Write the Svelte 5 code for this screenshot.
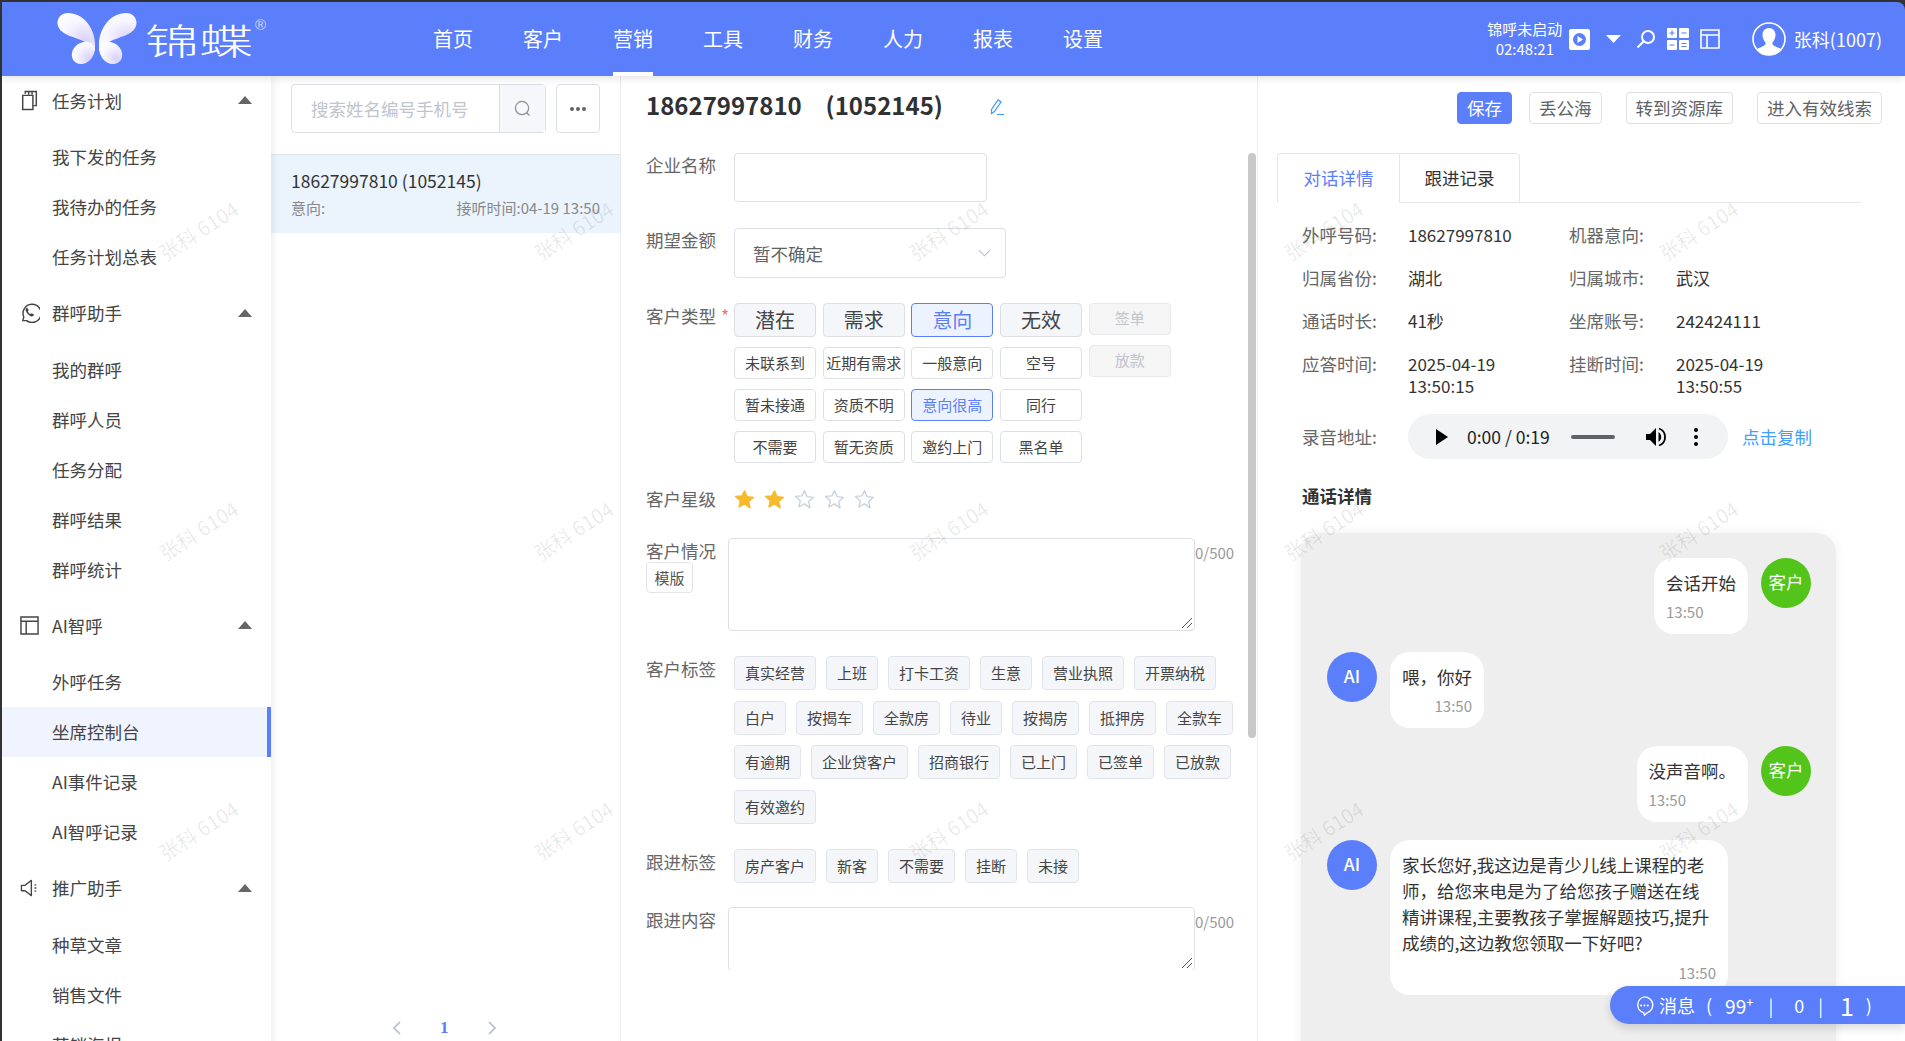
<script>
    const navItems = ['首页', '客户', '营销', '工具', '财务', '人力', '报表', '设置'];

    const groups = [
        { title: '任务计划', icon: 'doc', items: ['我下发的任务', '我待办的任务', '任务计划总表'] },
        { title: '群呼助手', icon: 'phone', items: ['我的群呼', '群呼人员', '任务分配', '群呼结果', '群呼统计'] },
        { title: 'AI智呼', icon: 'panel', items: ['外呼任务', '坐席控制台', 'AI事件记录', 'AI智呼记录'] },
        { title: '推广助手', icon: 'horn', items: ['种草文章', '销售文件', '营销海报'] }
    ];

    const typeRows = [
        ['潜在', '需求', '意向', '无效'],
        ['未联系到', '近期有需求', '一般意向', '空号'],
        ['暂未接通', '资质不明', '意向很高', '同行'],
        ['不需要', '暂无资质', '邀约上门', '黑名单']
    ];
    const activeTypes = ['意向', '意向很高'];

    const customerTags = ['真实经营', '上班', '打卡工资', '生意', '营业执照', '开票纳税', '白户', '按揭车', '全款房', '待业', '按揭房', '抵押房', '全款车', '有逾期', '企业贷客户', '招商银行', '已上门', '已签单', '已放款', '有效邀约'];
    const followTags = ['房产客户', '新客', '不需要', '挂断', '未接'];

    const info = [
        ['外呼号码:', '18627997810', '机器意向:', ''],
        ['归属省份:', '湖北', '归属城市:', '武汉'],
        ['通话时长:', '41秒', '坐席账号:', '242424111'],
        ['应答时间:', '2025-04-19 13:50:15', '挂断时间:', '2025-04-19 13:50:55']
    ];

    // watermark repeats on a fixed 375 x 300 step
    const marks = Array.from({ length: 15 });
</script>

<div class="page">
    <header class="topbar">
        <div class="logo">
            <svg class="wings" viewBox="0 0 80 52" width="80" height="52">
                <defs>
                    <radialGradient id="wing" cx="0.75" cy="0.75" r="0.9">
                        <stop offset="0" stop-color="#d9d0fa" />
                        <stop offset="0.6" stop-color="#f6f4ff" />
                        <stop offset="1" stop-color="#ffffff" />
                    </radialGradient>
                </defs>
                <path fill="url(#wing)" d="M38 30C37 14 26 0 11 0 3 0-1 7 1 13c3 9 17 11 25 15 5 2 9 5 12 10z" />
                <path fill="url(#wing)" d="M42 30C43 14 54 0 69 0c8 0 12 7 10 13-3 9-17 11-25 15-5 2-9 5-12 10z" />
                <path fill="url(#wing)" d="M38 36c-1 8-6 15-14 15-7 0-10-6-9-11 1-6 6-10 12-11 5-1 9 1 11 7z" />
                <path fill="url(#wing)" d="M42 36c1 8 6 15 14 15 7 0 10-6 9-11-1-6-6-10-12-11-5-1-9 1-11 7z" />
            </svg>
            <span class="brand">锦蝶</span>
            <span class="reg">®</span>
        </div>
        <nav class="nav">
            {#each navItems as item}
                <span class="nav-item" class:on={item === '营销'}>{item}</span>
            {/each}
        </nav>
        <div class="tools">
            <div class="call">
                <span>锦呼未启动</span>
                <span>02:48:21</span>
            </div>
            <svg class="t-play" viewBox="0 0 21 21" width="21" height="21">
                <rect width="21" height="21" rx="2" fill="#fff" />
                <circle cx="10.5" cy="10.5" r="6.5" fill="#5b7efb" />
                <path d="M8.5 7l5.5 3.5-5.5 3.5z" fill="#fff" />
            </svg>
            <svg class="t-caret" viewBox="0 0 15 8" width="15" height="8"><path d="M0 0h15L7.5 8z" fill="#fff" /></svg>
            <svg class="t-search" viewBox="0 0 20 20" width="20" height="20">
                <circle cx="12" cy="8" r="6" fill="none" stroke="#fff" stroke-width="2" />
                <path d="M7.5 12.5L1.5 18.5" stroke="#fff" stroke-width="2.2" />
            </svg>
            <svg class="t-calc" viewBox="0 0 22 22" width="22" height="22">
                <rect width="10" height="10" rx="1" fill="#fff" />
                <rect x="12" width="10" height="10" rx="1" fill="#fff" />
                <rect y="12" width="10" height="10" rx="1" fill="#fff" />
                <rect x="12" y="12" width="10" height="10" rx="1" fill="#fff" />
                <path d="M2.5 5h5M5 2.5v5M14.5 5h5M2.5 17h5M14.5 15.5h5M14.5 18.500h5" stroke="#5b7efb" stroke-width="1.2" />
            </svg>
            <svg class="t-panel" viewBox="0 0 20 20" width="20" height="20">
                <path d="M1 1h18v18H1zM1 6h18M7 6v13" fill="none" stroke="#fff" stroke-width="1.6" />
            </svg>
            <svg class="t-avatar" viewBox="0 0 34 34" width="34" height="34">
                <circle cx="17" cy="17" r="16" fill="none" stroke="#fff" stroke-width="1.6" />
                <path d="M17 6c4 0 6.500 3 6.500 7 0 3-1.500 6-3 7.500v2c2 2 6 3 8.500 4.500a15 15 0 0 1-24 0c2.500-1.500 6.500-2.500 8.500-4.500v-2c-1.500-1.500-3-4.500-3-7.500 0-4 2.500-7 6.500-7z" fill="#fff" />
            </svg>
            <span class="user">张科(1007)</span>
        </div>
    </header>

    <div class="body">
        <aside class="side">
            {#each groups as group}
                <div class="group-head">
                    <span class="g-icon">
                        {#if group.icon === 'doc'}
                            <svg viewBox="0 0 20 24" width="17" height="21"><path d="M5 4V1.500h13V18h-4M2 6h12v16.500H2zM9 1v4M13 1v4" fill="none" stroke="#444" stroke-width="1.700" /></svg>
                        {:else if group.icon === 'phone'}
                            <svg viewBox="0 0 22 22" width="21" height="21"><path d="M4 19.500l1-3.800A9.500 9.500 0 1 1 8 19.500z" fill="none" stroke="#444" stroke-width="1.500" /><path d="M7.500 6.500c-1 1-.8 3 1 5.300s4 3.700 5.700 3.200c1-.3 1.500-1 1.500-1.800l-2.500-1.500-1 1c-1.500-.5-2.500-1.800-3-3l1-1L8.700 6c-.4 0-.8.100-1.200.5z" fill="#444" /></svg>
                        {:else if group.icon === 'panel'}
                            <svg viewBox="0 0 20 20" width="19" height="19"><path d="M1 1h18v18H1zM1 5.500h18M6.500 5.500V19" fill="none" stroke="#444" stroke-width="1.500" /></svg>
                        {:else}
                            <svg viewBox="0 0 22 20" width="20" height="18"><path d="M1.500 7v6h4l7 5.500v-17l-7 5.500z" fill="none" stroke="#444" stroke-width="1.500" stroke-linejoin="round" /><path d="M16 6.500h2M16 10h2M16 13.500h2" stroke="#444" stroke-width="1.500" /></svg>
                        {/if}
                    </span>
                    <span class="g-title">{group.title}</span>
                    <span class="g-caret"></span>
                </div>
                <ul class="group-items">
                    {#each group.items as item}
                        <li class:current={item === '坐席控制台'}>{item}</li>
                    {/each}
                </ul>
            {/each}
        </aside>

        <section class="list">
            <div class="search-row">
                <div class="search">
                    <span class="ph">搜索姓名编号手机号</span>
                    <span class="s-btn">
                        <svg viewBox="0 0 18 18" width="17" height="17"><circle cx="8.500" cy="8.500" r="7" fill="none" stroke="#8a8f99" stroke-width="1.300" /><path d="M13.500 13.500l3 3" stroke="#8a8f99" stroke-width="1.300" /></svg>
                    </span>
                </div>
                <div class="more"><i></i><i></i><i></i></div>
            </div>
            <div class="lead">
                <div class="lead-name">18627997810 (1052145)</div>
                <div class="lead-sub"><span>意向:</span><span>接听时间:04-19 13:50</span></div>
            </div>
            <div class="pager">
                <svg viewBox="0 0 8 14" width="8" height="14"><path d="M7 1L1 7l6 6" fill="none" stroke="#b4bccc" stroke-width="1.600" /></svg>
                <b>1</b>
                <svg viewBox="0 0 8 14" width="8" height="14"><path d="M1 1l6 6-6 6" fill="none" stroke="#b4bccc" stroke-width="1.600" /></svg>
            </div>
        </section>

        <section class="detail">
            <div class="detail-head">
                <h2>18627997810 &nbsp;&nbsp;(1052145)</h2>
                <svg class="edit" viewBox="0 0 16 18" width="16" height="18">
                    <path d="M2.500 11.500L9 2l3 2-6.500 9.500-3 2z" fill="none" stroke="#409eff" stroke-width="1.300" />
                    <path d="M8 16.500h7" stroke="#409eff" stroke-width="1.200" />
                </svg>
            </div>
            <div class="form">
                <div class="row r-name">
                    <span class="label">企业名称</span>
                    <div class="input name"></div>
                </div>
                <div class="row r-money">
                    <span class="label">期望金额</span>
                    <div class="input select">
                        <span>暂不确定</span>
                        <svg viewBox="0 0 14 8" width="13" height="8"><path d="M1 1l6 6 6-6" fill="none" stroke="#b4bccc" stroke-width="1.100" /></svg>
                    </div>
                </div>
                <div class="row r-type">
                    <span class="label">客户类型<em>*</em></span>
                    <div class="types">
                        <div class="type-grid">
                            {#each typeRows as cols, r}
                                {#each cols as t}
                                    <span class="type" class:big={r === 0} class:active={activeTypes.includes(t)}>{t}</span>
                                {/each}
                            {/each}
                        </div>
                        <div class="type-off">
                            <span>签单</span>
                            <span>放款</span>
                        </div>
                    </div>
                </div>
                <div class="row r-star">
                    <span class="label">客户星级</span>
                    <div class="stars">
                        {#each [1, 2, 3, 4, 5] as n}
                            <svg viewBox="0 0 24 24" width="21" height="21">
                                <path d="M12 2l3 6.800 7.300.7-5.500 4.900 1.600 7.200L12 17l-6.400 3.600 1.600-7.200L1.700 8.500 9 7.800z"
                                    fill={n < 3 ? '#f7ba2a' : 'none'} stroke={n < 3 ? '#f7ba2a' : '#c6d1de'} stroke-width="1.500" stroke-linejoin="round" />
                            </svg>
                        {/each}
                    </div>
                </div>
                <div class="row r-note">
                    <div class="label-stack">
                        <span class="label">客户情况</span>
                        <span class="tpl">模版</span>
                    </div>
                    <div class="textarea"><span class="grip"></span></div>
                    <span class="count">0/500</span>
                </div>
                <div class="row r-tags">
                    <span class="label">客户标签</span>
                    <div class="tags">
                        {#each customerTags as t}<span class="tag">{t}</span>{/each}
                    </div>
                </div>
                <div class="row r-follow">
                    <span class="label">跟进标签</span>
                    <div class="tags">
                        {#each followTags as t}<span class="tag">{t}</span>{/each}
                    </div>
                </div>
                <div class="row r-content">
                    <span class="label">跟进内容</span>
                    <div class="textarea"><span class="grip"></span></div>
                    <span class="count">0/500</span>
                </div>
            </div>
            <span class="thumb"></span>
        </section>

        <section class="right">
            <div class="actions">
                <span class="act primary">保存</span>
                <span class="act">丢公海</span>
                <span class="act">转到资源库</span>
                <span class="act">进入有效线索</span>
            </div>
            <div class="tabs">
                <span class="tab on">对话详情</span>
                <span class="tab">跟进记录</span>
            </div>
            <div class="info">
                {#each info as row}
                    <span class="k">{row[0]}</span>
                    <span class="v narrow">{row[1]}</span>
                    <span class="k">{row[2]}</span>
                    <span class="v narrow">{row[3]}</span>
                {/each}
            </div>
            <div class="audio-row">
                <span class="k">录音地址:</span>
                <div class="audio">
                    <svg viewBox="0 0 12 16" width="12" height="16"><path d="M0 0l12 8-12 8z" fill="#000" /></svg>
                    <span class="time">0:00 / 0:19</span>
                    <span class="track"></span>
                    <svg class="vol" viewBox="0 0 20 20" width="20" height="20"><path d="M0 7v6h4l6 6V1L4 7z" fill="#000" /><path d="M12.500 5a6 6 0 0 1 0 10z" fill="#000" /><path d="M13 1.500a9 9 0 0 1 0 17" fill="none" stroke="#000" stroke-width="1.800" /></svg>
                    <span class="dots"><i></i><i></i><i></i></span>
                </div>
                <span class="copy">点击复制</span>
            </div>
            <h3 class="call-title">通话详情</h3>
            <div class="chat">
                <div class="msg me">
                    <div class="bubble"><p>会话开始</p><time>13:50</time></div>
                    <span class="avatar green">客户</span>
                </div>
                <div class="msg">
                    <span class="avatar blue">AI</span>
                    <div class="bubble"><p>喂，你好</p><time>13:50</time></div>
                </div>
                <div class="msg me">
                    <div class="bubble"><p>没声音啊。</p><time>13:50</time></div>
                    <span class="avatar green">客户</span>
                </div>
                <div class="msg">
                    <span class="avatar blue">AI</span>
                    <div class="bubble wide">
                        <p>家长您好,我这边是青少儿线上课程的老<br />师，给您来电是为了给您孩子赠送在线<br />精讲课程,主要教孩子掌握解题技巧,提升<br />成绩的,这边教您领取一下好吧?</p>
                        <time>13:50</time>
                    </div>
                </div>
            </div>
        </section>
    </div>

    <div class="msg-bar">
        <svg viewBox="0 0 22 22" width="21" height="21">
            <path d="M11 2a8.500 8.500 0 0 1 3 16.500L11 21l-1-2.500A8.500 8.500 0 0 1 11 2z" fill="none" stroke="#fff" stroke-width="1.500" />
            <circle cx="7.500" cy="11" r="1.100" fill="#fff" /><circle cx="11" cy="11" r="1.100" fill="#fff" /><circle cx="14.500" cy="11" r="1.100" fill="#fff" />
        </svg>
        <span class="m-title">消息</span>
        <span class="m-br">(</span>
        <span class="m-num">99<sup>+</sup></span>
        <span class="m-sep">|</span>
        <span class="m-zero">0</span>
        <span class="m-sep">|</span>
        <span class="m-one">1</span>
        <span class="m-br">)</span>
    </div>

    <div class="marks">
        {#each marks as _}
            <span class="mark"><span>张科 6104</span></span>
        {/each}
    </div>
</div>

<style>
    :global(body) {
        margin: 0;
        overflow: hidden;
        background: #fff;
    }

    .page {
        position: relative;
        width: 1905px;
        height: 1041px;
        overflow: hidden;
        background: #333;
        padding: 2px 0 0 2px;
        box-sizing: border-box;
        font-family: "Noto Sans CJK SC", "Liberation Sans", sans-serif;
        font-size: 17.5px;
        color: #333;
    }

    /* top bar */
    .topbar {
        position: relative;
        z-index: 3;
        display: flex;
        align-items: center;
        height: 74px;
        background: #5b7efb;
        border-top-right-radius: 8px;
        box-shadow: 0 2px 8px rgba(0, 0, 0, 0.12);
        color: #fff;
    }

    .logo {
        display: flex;
        align-items: center;
        width: 431px;
        padding-left: 55px;
        box-sizing: border-box;
    }

    .brand {
        flex: none;
        width: 72px;
        margin-left: 8px;
        font-size: 36px;
        font-weight: 300;
        line-height: 48px;
        transform: scaleX(1.5);
        transform-origin: left;
    }

    .reg {
        flex: none;
        width: 16px;
        margin: -28px 0 0 38px;
        font-family: "Liberation Sans", sans-serif;
        font-size: 15px;
        line-height: 16px;
        opacity: 0.7;
    }

    .nav {
        display: flex;
        gap: 50px;
        height: 74px;
    }

    .nav-item {
        width: 40px;
        height: 70px;
        line-height: 74px;
        font-size: 20px;
        white-space: nowrap;
        border-bottom: 4px solid transparent;
    }

    .nav-item.on {
        border-bottom-color: #fff;
    }

    .tools {
        display: flex;
        align-items: center;
        margin-left: auto;
        padding-right: 23px;
    }

    .call {
        display: flex;
        flex-direction: column;
        align-items: center;
        width: 76px;
        font-size: 15px;
        line-height: 20px;
    }

    .t-play {
        margin-left: 6px;
    }

    .t-caret {
        margin-left: 16px;
    }

    .t-search {
        margin-left: 15px;
    }

    .t-calc {
        margin-left: 11px;
    }

    .t-panel {
        margin-left: 11px;
    }

    .t-avatar {
        margin-left: 32px;
    }

    .user {
        margin-left: 8px;
        font-size: 18px;
    }

    .body {
        display: flex;
        height: 965px;
        background: #fff;
    }

    /* sidebar */
    .side {
        position: relative;
        z-index: 2;
        width: 269px;
        flex: none;
        height: 1000px;
        box-shadow: 2px 0 8px rgba(0, 0, 0, 0.08);
        background: #fff;
    }

    .group-head {
        display: flex;
        align-items: center;
        height: 48px;
        padding: 0 0 2px 17px;
        color: #444;
    }

    .g-icon {
        display: flex;
        justify-content: center;
        width: 21px;
    }

    .g-title {
        margin-left: 12px;
    }

    .g-caret {
        margin-left: auto;
        margin-right: 19px;
        border: 7px solid transparent;
        border-top: 0;
        border-bottom: 8px solid #666;
    }

    .group-items {
        list-style: none;
        margin: 0;
        padding: 6px 0 6.500px;
    }

    .group-items li {
        height: 50px;
        line-height: 49px;
        padding-left: 50px;
        color: #444;
    }

    .group-items li.current {
        background: #f0f4ff;
        border-right: 4px solid #5b7efb;
    }

    /* lead list */
    .list {
        position: relative;
        flex: none;
        width: 350px;
        border-right: 1px solid #e8eaee;
        box-sizing: border-box;
        padding-top: 8px;
    }

    .search-row {
        display: flex;
        gap: 10px;
        padding-left: 20px;
        height: 49px;
    }

    .search {
        display: flex;
        width: 255px;
        border: 1px solid #dcdfe6;
        border-radius: 4px;
        box-sizing: border-box;
    }

    .ph {
        flex: 1;
        padding-left: 19px;
        line-height: 47px;
        color: #c0c4cc;
    }

    .s-btn {
        display: flex;
        align-items: center;
        justify-content: center;
        width: 45px;
        background: #f5f7fa;
        border-left: 1px solid #dcdfe6;
    }

    .more {
        display: flex;
        align-items: center;
        justify-content: center;
        gap: 2px;
        width: 44px;
        border: 1px solid #dcdfe6;
        border-radius: 4px;
        box-sizing: border-box;
    }

    .more i {
        width: 4px;
        height: 4px;
        border-radius: 50%;
        background: #606266;
    }

    .lead {
        margin-top: 21px;
        height: 79px;
        padding: 0 20px;
        background: #ebf3fd;
        border-top: 1px solid #e2e7ee;
        box-sizing: border-box;
    }

    .lead-name {
        padding-top: 13px;
        font-size: 17.500px;
        line-height: 26px;
        color: #333;
    }

    .lead-sub {
        display: flex;
        justify-content: space-between;
        margin-top: 1.500px;
        font-size: 15px;
        line-height: 24px;
        color: #888;
    }

    .pager {
        position: absolute;
        left: 122px;
        top: 942px;
        display: flex;
        align-items: center;
        gap: 39px;
    }

    .pager b {
        color: #5b7efb;
        font-size: 17px;
        font-family: "Liberation Serif", serif;
    }

    /* form */
    .detail {
        position: relative;
        flex: none;
        width: 637px;
        padding-left: 25px;
        box-sizing: border-box;
        border-right: 1px solid #eceef2;
    }

    .detail-head {
        display: flex;
        align-items: center;
        height: 57px;
        padding-bottom: 20px;
    }

    h2 {
        margin: 0;
        font-size: 24px;
        font-weight: 700;
        word-spacing: 2.500px;
        color: #303133;
        white-space: nowrap;
    }

    .edit {
        margin: 4px 0 0 46px;
    }

    .form {
        height: 817px;
        overflow: hidden;
    }

    .row {
        display: flex;
    }

    .label {
        flex: none;
        width: 88px;
        line-height: 26px;
        color: #666;
        white-space: nowrap;
    }

    .r-name .label,
    .r-money .label {
        line-height: 24px;
    }

    .label em {
        color: #f56c6c;
        font-style: normal;
        margin-left: 5px;
    }

    .input {
        border: 1px solid #dcdfe6;
        border-radius: 4px;
        box-sizing: border-box;
    }

    .name {
        width: 253px;
        height: 49px;
    }

    .r-money {
        margin-top: 26px;
    }

    .select {
        display: flex;
        align-items: center;
        justify-content: space-between;
        width: 272px;
        height: 50px;
        padding: 0 14px 0 18px;
        color: #606266;
    }

    .r-type {
        margin-top: 25px;
    }

    .types {
        display: flex;
        gap: 6.700px;
    }

    .type-grid {
        display: grid;
        grid-template-columns: repeat(4, 82px);
        column-gap: 6.700px;
        row-gap: 10px;
    }

    .type {
        height: 32px;
        line-height: 30px;
        text-align: center;
        font-size: 15px;
        white-space: nowrap;
        border: 1px solid #dcdfe6;
        border-radius: 4px;
        box-sizing: border-box;
        color: #444;
    }

    .type.big {
        height: 34px;
        line-height: 31px;
        font-size: 20px;
        background: #f4f6fa;
    }

    .type.active {
        background: #ecf3ff;
        border-color: #5b7efb;
        color: #5b7efb;
    }

    .type-off {
        display: flex;
        flex-direction: column;
        gap: 10px;
    }

    .type-off span {
        width: 82px;
        height: 32px;
        line-height: 28px;
        text-align: center;
        font-size: 15px;
        background: #f5f5f5;
        border: 1px solid #e8e9ec;
        border-radius: 4px;
        box-sizing: border-box;
        color: #c0c4cc;
    }

    .r-star {
        margin-top: 21px;
        align-items: center;
        height: 30px;
    }

    .stars {
        display: flex;
        gap: 9px;
    }

    .r-note {
        margin-top: 24px;
        height: 93px;
    }

    .label-stack {
        display: flex;
        flex-direction: column;
        align-items: flex-start;
        width: 82px;
        flex: none;
    }

    .label-stack .label {
        width: auto;
    }

    .tpl {
        margin-top: -2px;
        width: 47px;
        height: 31px;
        line-height: 29px;
        text-align: center;
        font-size: 15px;
        border: 1px solid #e1e4ea;
        border-radius: 4px;
        box-sizing: border-box;
        color: #555;
    }

    .textarea {
        position: relative;
        width: 467px;
        height: 93px;
        flex: none;
        border: 1px solid #dcdfe6;
        border-radius: 4px;
        box-sizing: border-box;
    }

    .r-content .textarea {
        height: 64px;
    }

    .grip {
        position: absolute;
        right: 2px;
        bottom: 2px;
        width: 10px;
        height: 10px;
        background: linear-gradient(135deg, transparent 45%, #555 46%, #555 54%, transparent 55%, transparent 70%, #555 71%, #555 79%, transparent 80%);
    }

    .count {
        margin: 4px 0 0 0;
        font-size: 15px;
        color: #999;
    }

    .r-tags {
        margin-top: 25px;
    }

    .tags {
        display: flex;
        flex-wrap: wrap;
        align-content: flex-start;
        gap: 10.500px 10px;
        width: 510px;
    }

    .tag {
        height: 34px;
        line-height: 31px;
        padding: 0 10px;
        font-size: 15px;
        white-space: nowrap;
        background: #f4f6fa;
        border: 1px solid #e1e4ea;
        border-radius: 4px;
        box-sizing: border-box;
        color: #444;
    }

    .r-follow {
        margin-top: 25px;
    }

    .r-content {
        margin-top: 24px;
    }

    .r-content .label {
        width: 82px;
    }

    .thumb {
        position: absolute;
        right: 1px;
        top: 77px;
        width: 8px;
        height: 585px;
        border-radius: 4px;
        background: #c8c8c8;
    }

    /* right pane */
    .right {
        position: relative;
        flex: 1;
        padding-left: 19px;
        min-width: 0;
    }

    .actions {
        display: flex;
        justify-content: flex-end;
        gap: 24px;
        height: 77px;
        padding: 16px 23px 0 0;
        box-sizing: border-box;
        margin-left: -100px;
    }

    .act {
        height: 32px;
        line-height: 30px;
        padding: 0 9px;
        border: 1px solid #dcdfe6;
        border-radius: 4px;
        box-sizing: border-box;
        color: #606266;
        white-space: nowrap;
    }

    .act.primary {
        background: #5b7efb;
        border-color: #5b7efb;
        color: #fff;
        margin-right: -7px;
    }

    .tabs {
        display: flex;
        width: 584px;
        height: 50px;
        border-bottom: 1px solid #e4e7ed;
        box-sizing: border-box;
    }

    .tab {
        width: 122px;
        height: 50px;
        line-height: 48px;
        text-align: center;
        box-sizing: border-box;
        border: 1px solid #e4e7ed;
        color: #333;
    }

    .tab:first-child {
        border-top-left-radius: 4px;
        border-right: 0;
        border-bottom-color: #fff;
        color: #5b7efb;
    }

    .tab:last-child {
        width: 121px;
        border-top-right-radius: 4px;
    }

    .info {
        display: grid;
        grid-template-columns: 106px 161px 107px 150px;
        row-gap: 21px;
        margin: 21px 0 0 25px;
        line-height: 22px;
    }

    .k {
        color: #666;
        white-space: nowrap;
    }

    .v {
        color: #333;
    }

    .v.narrow {
        font-size: 17px;
        width: 110px;
    }

    .audio-row {
        display: flex;
        align-items: center;
        margin: 17px 0 0 25px;
    }

    .audio-row .k {
        width: 106px;
    }

    .audio {
        display: flex;
        align-items: center;
        width: 320px;
        height: 45px;
        padding-left: 28px;
        box-sizing: border-box;
        border-radius: 23px;
        background: #f1f3f4;
    }

    .time {
        margin-left: 19px;
        font-size: 17.500px;
        color: #202124;
        white-space: nowrap;
    }

    .track {
        margin-left: 21px;
        width: 44px;
        height: 4px;
        border-radius: 2px;
        background: #5f6368;
    }

    .vol {
        margin-left: 31px;
    }

    .dots {
        display: flex;
        flex-direction: column;
        gap: 3px;
        margin-left: 28px;
    }

    .dots i {
        width: 4px;
        height: 4px;
        border-radius: 50%;
        background: #000;
    }

    .copy {
        margin-left: 14px;
        color: #409eff;
        white-space: nowrap;
    }

    .call-title {
        margin: 24px 0 0 25px;
        font-size: 17.500px;
        line-height: 26px;
        font-weight: 700;
        color: #333;
    }

    .chat {
        margin: 24px 0 0 24px;
        width: 535px;
        height: 560px;
        padding: 25px 25px 0 26px;
        box-sizing: border-box;
        border-radius: 20px;
        background: #eee;
        box-shadow: 0 0 12px rgba(0, 0, 0, 0.06);
    }

    .msg {
        display: flex;
        align-items: flex-start;
        gap: 13px;
        margin-bottom: 18px;
    }

    .msg.me {
        justify-content: flex-end;
    }

    .bubble {
        padding: 12px;
        border-radius: 20px;
        background: #fff;
        text-align: right;
    }

    .bubble p {
        margin: 0;
        line-height: 26px;
        text-align: left;
        color: #333;
        white-space: nowrap;
    }

    .msg.me .bubble {
        text-align: left;
    }

    .bubble time {
        display: block;
        margin-top: 6px;
        font-size: 15px;
        line-height: 20px;
        color: #999;
    }

    .wide {
        width: 338px;
        box-sizing: border-box;
        height: 155px;
    }

    .wide time {
        margin-top: 7px;
    }

    .avatar {
        flex: none;
        width: 50px;
        height: 50px;
        line-height: 48px;
        text-align: center;
        border-radius: 50%;
        color: #fff;
    }

    .green {
        background: #52c41a;
    }

    .blue {
        background: #5b7efb;
        font-weight: 500;
    }

    /* floating message bar */
    .msg-bar {
        position: absolute;
        z-index: 5;
        right: 0;
        top: 986px;
        width: 295px;
        height: 38px;
        display: flex;
        align-items: center;
        padding-left: 24px;
        box-sizing: border-box;
        border-radius: 19px 0 0 19px;
        background: #5b7efb;
        box-shadow: 0 4px 10px rgba(0, 0, 0, 0.15);
        color: #fff;
        white-space: nowrap;
    }

    .m-title {
        margin-left: 4px;
        font-size: 18px;
    }

    .m-br {
        margin-left: 11px;
        font-size: 18px;
    }

    .m-num {
        margin-left: 13px;
        font-size: 19px;
        line-height: 1;
    }

    .m-num sup {
        font-size: 13px;
        line-height: 0;
    }

    .m-sep {
        margin-left: 15px;
    }

    .m-zero {
        margin-left: 21px;
        font-size: 18px;
    }

    .m-zero + .m-sep {
        margin-left: 14px;
    }

    .m-one {
        margin-left: 17px;
        font-size: 25px;
        line-height: 1;
    }

    .m-one + .m-br {
        margin-left: 12px;
    }

    /* watermark laid over everything below the top bar */
    .marks {
        position: absolute;
        z-index: 4;
        left: 11px;
        top: 80px;
        display: grid;
        grid-template-columns: repeat(5, 375px);
        grid-auto-rows: 300px;
        pointer-events: none;
    }

    .mark {
        display: flex;
        align-items: center;
        justify-content: center;
    }

    .mark span {
        transform: rotate(-33deg);
        font-size: 20px;
        color: rgba(0, 0, 0, 0.09);
        white-space: nowrap;
    }
</style>
